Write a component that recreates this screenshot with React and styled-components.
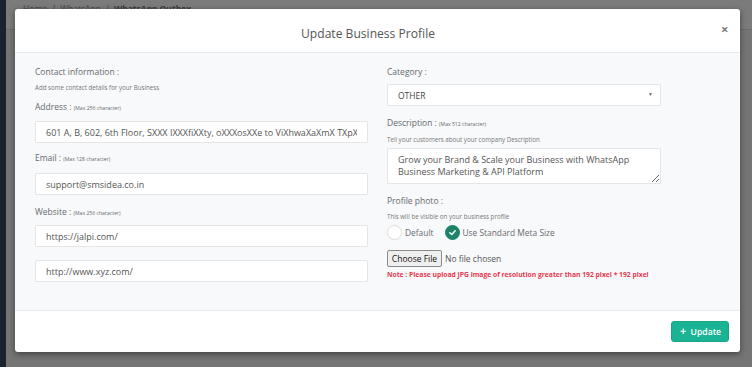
import React from "react";
import styled, { createGlobalStyle } from "styled-components";
import { FaPlus } from "react-icons/fa";

const GlobalStyle = createGlobalStyle`
  html, body {
    margin: 0;
    padding: 0;
  }
  body {
    font-family: "Open Sans", "Liberation Sans", sans-serif;
    background: #757575;
    overflow: hidden;
  }
  * {
    box-sizing: border-box;
  }
`;

const Page = styled.div`
  position: relative;
  display: flex;
  width: 752px;
  height: 367px;
  overflow: hidden;
`;

const Sidebar = styled.div`
  width: 6px;
  background: #1a222d;
`;

const Main = styled.div`
  flex: 1;
  display: flex;
  flex-direction: column;
  background: #757575;
`;

const TopBar = styled.div`
  height: 30px;
  padding: 3px 0 0 17px;
  background: #7b7b7b;
  border-bottom: 1px solid #6b6b6b;
`;

const Breadcrumb = styled.div`
  display: flex;
  gap: 5px;
  font-size: 8.5px;
  line-height: 12px;
  color: #474747;

  b {
    font-weight: 700;
    color: #3c3c3c;
  }
`;

const Overlay = styled.div`
  position: absolute;
  inset: 0;
  padding: 9px 0 0 15px;
`;

const Modal = styled.div`
  width: 725px;
  height: 343px;
  display: flex;
  flex-direction: column;
  background: #fff;
  border-radius: 3px;
  box-shadow: 0 2px 6px rgba(0, 0, 0, 0.45);
  overflow: hidden;
`;

const Header = styled.div`
  height: 44px;
  display: flex;
  align-items: center;
  border-bottom: 1px solid #e7eaec;
`;

const Title = styled.h4`
  flex: 1;
  margin: 6px 0 0;
  text-align: center;
  font-size: 12.1px;
  font-weight: 400;
  color: #555;
`;

const Close = styled.span`
  width: 19px;
  margin-bottom: 2px;
  font-size: 13px;
  font-weight: 700;
  line-height: 13px;
  color: #7a7a7a;
`;

const Body = styled.div`
  flex: 1;
  display: grid;
  grid-template-columns: 333px 274px;
  column-gap: 19px;
  align-items: start;
  padding: 13px 0 0 20px;
  background: #f8f9fb;
`;

const Column = styled.div`
  display: flex;
  flex-direction: column;
`;

const Label = styled.div`
  margin-top: ${(p) => p.$mt || 0}px;
  font-size: 8.5px;
  line-height: 12px;
  color: #676a6c;

  small {
    font-size: 5.1px;
  }
`;

const Hint = styled.div`
  margin-top: ${(p) => p.$mt || 0}px;
  font-size: 6.2px;
  line-height: 8px;
  color: #777;
`;

const TextInput = styled.input`
  margin-top: ${(p) => p.$mt || 0}px;
  width: 100%;
  height: 22px;
  padding: 0 10px;
  border: 1px solid #e5e6e7;
  border-radius: 1px;
  background: #fff;
  font-family: "Open Sans", "Liberation Sans", sans-serif;
  font-size: 9px;
  color: #555;
  outline: none;
`;

const Select = styled.div`
  margin-top: ${(p) => p.$mt || 0}px;
  height: 22px;
  display: flex;
  align-items: center;
  justify-content: space-between;
  padding: 0 7px 0 10px;
  border: 1px solid #e5e6e7;
  background: #fff;
  font-size: 8.5px;
  color: #444;

  i {
    font-style: normal;
    font-size: 5px;
    color: #666;
    margin-bottom: 3px;
  }
`;

const TextArea = styled.textarea`
  margin-top: ${(p) => p.$mt || 0}px;
  width: 100%;
  height: 36px;
  padding: 5px 10px 0;
  border: 1px solid #e5e6e7;
  background: #fff;
  font-family: "Open Sans", "Liberation Sans", sans-serif;
  font-size: 9px;
  line-height: 12.4px;
  color: #555;
  resize: vertical;
  outline: none;
`;

const RadioRow = styled.div`
  margin-top: ${(p) => p.$mt || 0}px;
  height: 16px;
  display: flex;
  align-items: center;
`;

const RadioOption = styled.label`
  display: flex;
  align-items: center;
  gap: 3px;
  margin-right: 11px;
  font-size: 8.4px;
  color: #676a6c;
`;

const RadioDot = styled.span`
  width: 15px;
  height: 15px;
  border-radius: 50%;
  display: flex;
  align-items: center;
  justify-content: center;
  border: 1px solid ${(p) => (p.$checked ? "#1d826a" : "#dcdcdc")};
  background: ${(p) => (p.$checked ? "#1d826a" : "#fff")};
`;

const FileRow = styled.div`
  margin-top: ${(p) => p.$mt || 0}px;
  display: flex;
  align-items: center;
  gap: 3px;
  font-size: 8.5px;
  color: #555;
`;

const FileButton = styled.span`
  width: 55px;
  height: 17px;
  display: flex;
  align-items: center;
  justify-content: center;
  background: #efefef;
  border: 1px solid #8a8a8a;
  border-radius: 2px;
  color: #111;
`;

const Note = styled.div`
  margin-top: ${(p) => p.$mt || 0}px;
  font-size: 6.75px;
  line-height: 8px;
  font-weight: 700;
  color: #e63950;
`;

const Footer = styled.div`
  height: 42px;
  display: flex;
  align-items: center;
  justify-content: flex-end;
  padding-right: 11px;
  border-top: 1px solid #e7eaec;
`;

const UpdateButton = styled.button`
  height: 21px;
  display: flex;
  align-items: center;
  gap: 4px;
  padding: 0 7px 0 8px;
  border: 1px solid #18a689;
  border-radius: 3px;
  background: #1ab394;
  color: #fff;
  font-family: "Open Sans", "Liberation Sans", sans-serif;
  font-size: 8.6px;
  font-weight: 600;

  svg {
    font-size: 6.5px;
  }
`;

const Check = () => (
  <svg width="9" height="9" viewBox="0 0 10 10">
    <polyline points="2,5.2 4.2,7.3 8,3" fill="none" stroke="#fff" strokeWidth="1.6" strokeLinecap="round" strokeLinejoin="round" />
  </svg>
);

const App = () => (
  <>
    <GlobalStyle />
    <Page>
      <Sidebar />
      <Main>
        <TopBar>
          <Breadcrumb>
            <span>Home</span>
            <span>/</span>
            <span>WhatsApp</span>
            <span>/</span>
            <b>WhatsApp Outbox</b>
          </Breadcrumb>
        </TopBar>
      </Main>

      <Overlay>
        <Modal>
          <Header>
            <Title>Update Business Profile</Title>
            <Close>×</Close>
          </Header>

          <Body>
            <Column>
              <Label>Contact information :</Label>
              <Hint $mt={6}>Add some contact details for your Business</Hint>
              <Label $mt={9}>
                Address : <small>(Max 256 character)</small>
              </Label>
              <TextInput $mt={7} readOnly defaultValue="601 A, B, 602, 6th Floor, SXXX IXXXfiXXty, oXXXosXXe to ViXhwaXaXmX TXpX, Ahmedabad" />
              <Label $mt={9}>
                Email : <small>(Max 128 character)</small>
              </Label>
              <TextInput $mt={8} readOnly defaultValue="support@smsidea.co.in" />
              <Label $mt={11}>
                Website : <small>(Max 256 character)</small>
              </Label>
              <TextInput $mt={6} readOnly defaultValue="https://jalpi.com/" />
              <TextInput $mt={13} readOnly defaultValue="http://www.xyz.com/" />
            </Column>

            <Column>
              <Label>Category :</Label>
              <Select $mt={6}>
                <span>OTHER</span>
                <i>▼</i>
              </Select>
              <Label $mt={11}>
                Description : <small>(Max 512 character)</small>
              </Label>
              <Hint $mt={6}>Tell your customers about your company Description</Hint>
              <TextArea $mt={4} readOnly defaultValue="Grow your Brand & Scale your Business with WhatsApp Business Marketing & API Platform" />
              <Label $mt={11}>Profile photo :</Label>
              <Hint $mt={6}>This will be visible on your business profile</Hint>
              <RadioRow $mt={3}>
                <RadioOption>
                  <RadioDot />
                  Default
                </RadioOption>
                <RadioOption>
                  <RadioDot $checked>
                    <Check />
                  </RadioDot>
                  Use Standard Meta Size
                </RadioOption>
              </RadioRow>
              <FileRow $mt={10}>
                <FileButton>Choose File</FileButton>
                <span>No file chosen</span>
              </FileRow>
              <Note $mt={4}>Note : Please upload JPG image of resolution greater than 192 pixel * 192 pixel</Note>
            </Column>
          </Body>

          <Footer>
            <UpdateButton>
              <FaPlus />
              Update
            </UpdateButton>
          </Footer>
        </Modal>
      </Overlay>
    </Page>
  </>
);

export default App;
